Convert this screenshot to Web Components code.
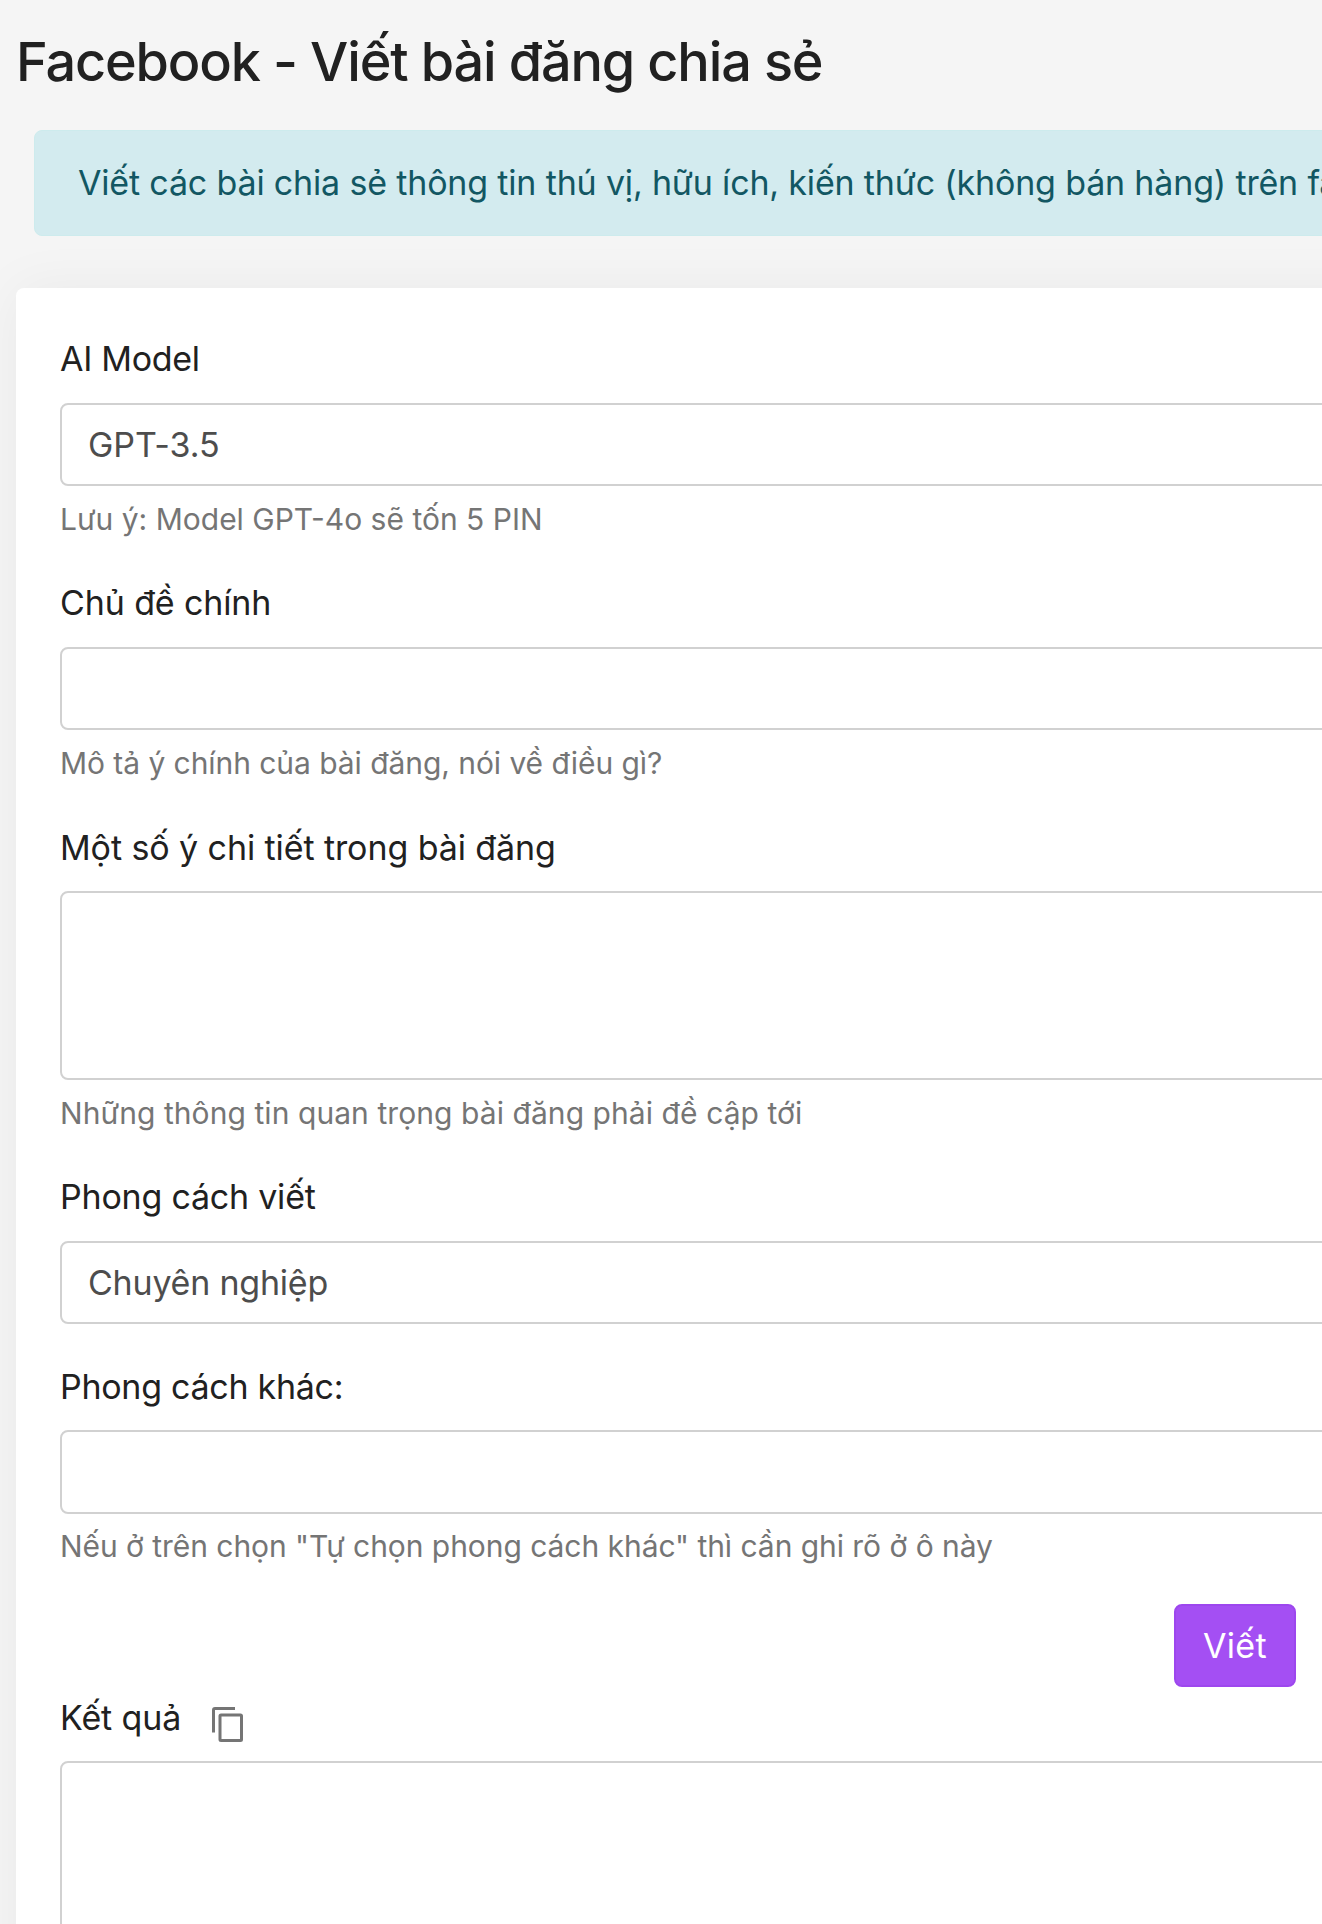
<!DOCTYPE html>
<html lang="vi">
<head>
<meta charset="utf-8">
<title>Facebook - Viết bài đăng chia sẻ</title>
<style>
  html, body { margin: 0; height: 100%; }

  body {
    overflow: hidden;
    background: #f5f5f5;
    color: #212121;
    font-family: Inter, "Noto Sans", sans-serif;
    font-size: 34px;
  }

  .model { --label-track: -0.3px; --value-track: -0.05px; }
  .topic { --label-track: -0.12px; --help-track: -0.06px; }
  .details { --label-track: -0.09px; --label-line: 56px; --help-track: 0.07px; }
  .style { --label-track: -0.22px; --value-track: -0.22px; }
  .other { --label-track: -0.28px; --label-line: 56px; --help-track: -0.05px; --input-height: 84px; --help-gap: 10px; margin-bottom: 1px; }
  .result { --label-track: -0.1px; --label-line: 56px; --rows-height: 400px; }
</style>
</head>
<body>
<writer-page heading="Facebook - Viết bài đăng chia sẻ">
  <info-alert slot="alert">Viết các bài chia sẻ thông tin thú vị, hữu ích, kiến thức (không bán hàng) trên facebook</info-alert>

  <form-field class="model" label="AI Model" help="Lưu ý: Model GPT-4o sẽ tốn 5 PIN">
    <select-box>GPT-3.5</select-box>
  </form-field>
  <form-field class="topic" label="Chủ đề chính" help="Mô tả ý chính của bài đăng, nói về điều gì?">
    <text-box></text-box>
  </form-field>
  <form-field class="details" label="Một số ý chi tiết trong bài đăng" help="Những thông tin quan trọng bài đăng phải đề cập tới">
    <text-box multiline></text-box>
  </form-field>
  <form-field class="style" label="Phong cách viết">
    <select-box>Chuyên nghiệp</select-box>
  </form-field>
  <form-field class="other" label="Phong cách khác:" help='Nếu ở trên chọn "Tự chọn phong cách khác" thì cần ghi rõ ở ô này'>
    <text-box></text-box>
  </form-field>

  <submit-row>Viết</submit-row>

  <form-field class="result" label="Kết quả">
    <copy-icon slot="action"></copy-icon>
    <text-box multiline></text-box>
  </form-field>
</writer-page>

<script>
/**
 * Base class: renders the template of the subclass into an open shadow root.
 */
class BaseElement extends HTMLElement {
  constructor() {
    super();
    this.attachShadow({ mode: 'open' });
  }

  connectedCallback() {
    this.shadowRoot.innerHTML = this.template();
  }
}

/** Page shell: heading, alert slot and the white card */
class WriterPage extends BaseElement {
  template() {
    return `
      <style>
        :host {
          display: block;
          height: 100%;
          overflow: hidden;
        }

        .content {
          width: 1400px;
        }

        h1 {
          margin: 0;
          padding: 28px 0 0 16px;
          height: 103px;
          box-sizing: border-box;
          font-size: 54px;
          font-weight: 500;
          line-height: 68px;
          letter-spacing: -1.15px;
          white-space: nowrap;
        }

        .alert {
          padding: 27px 0 0 34px;
        }

        .card {
          display: flex;
          flex-direction: column;
          gap: 35px;
          margin: 52px 0 0 16px;
          padding: 44px;
          box-sizing: border-box;
          background: #fff;
          border-radius: 8px;
          box-shadow: 0 0 56px rgba(33, 37, 41, 0.05);
        }
      </style>

      <div class="content">
        <h1>${this.getAttribute('heading')}</h1>
        <div class="alert"><slot name="alert"></slot></div>
        <div class="card"><slot></slot></div>
      </div>
    `;
  }
}

class InfoAlert extends BaseElement {
  template() {
    return `
      <style>
        :host {
          display: block;
          height: 106px;
          padding: 0 43px;
          box-sizing: border-box;
          background: #d3ebef;
          border: 1px solid #cdebed;
          border-radius: 8px;
          color: #125763;
          line-height: 104px;
          letter-spacing: -0.17px;
          white-space: nowrap;
        }
      </style>
      <slot></slot>
    `;
  }
}

/** Label, control and optional help text */
class FormField extends BaseElement {
  template() {
    const help = this.getAttribute('help');
    return `
      <style>
        :host {
          display: block;
        }

        :host(.result) {
          margin-top: -32px;
        }

        .label {
          display: flex;
          gap: 31px;
          height: 54px;
          margin-bottom: 17px;
          line-height: var(--label-line, 54px);
          white-space: nowrap;
        }

        label {
          letter-spacing: var(--label-track, 0);
        }

        .help {
          margin-top: var(--help-gap, 11px);
          color: #757575;
          font-size: 30px;
          line-height: 44px;
          letter-spacing: var(--help-track, 0);
          white-space: nowrap;
        }
      </style>

      <div class="label">
        <label>${this.getAttribute('label')}</label>
        <slot name="action"></slot>
      </div>
      <slot></slot>
      ${help ? `<div class="help">${help}</div>` : ''}
    `;
  }
}

class SelectBox extends BaseElement {
  template() {
    return `
      <style>
        :host {
          display: block;
          height: 83px;
          padding-left: 26px;
          box-sizing: border-box;
          border: 2px solid #d1d1d1;
          border-radius: 8px;
          background: #fff;
          color: #4d4d4d;
          line-height: 79px;
          letter-spacing: var(--value-track, 0);
        }
      </style>
      <slot></slot>
    `;
  }
}

class TextBox extends BaseElement {
  template() {
    const multiline = this.hasAttribute('multiline');
    return `
      <style>
        :host {
          display: block;
        }

        input, textarea {
          display: block;
          width: 100%;
          height: var(--input-height, 83px);
          margin: 0;
          padding: 12px 26px;
          box-sizing: border-box;
          border: 2px solid #d1d1d1;
          border-radius: 8px;
          outline: none;
          background: #fff;
          color: #4d4d4d;
          font: inherit;
          resize: none;
        }

        textarea {
          height: var(--rows-height, 189px);
        }
      </style>
      ${multiline ? '<textarea></textarea>' : '<input type="text">'}
    `;
  }
}

class SubmitRow extends BaseElement {
  template() {
    return `
      <style>
        :host {
          display: flex;
          justify-content: flex-end;
          width: 1236px;
        }

        button {
          width: 122px;
          height: 83px;
          padding: 0;
          border: 2px solid #9d47ee;
          border-radius: 8px;
          background: #a44ff3;
          color: #fff;
          font: inherit;
          letter-spacing: 0.3px;
        }
      </style>
      <button type="button"><slot></slot></button>
    `;
  }
}

class CopyIcon extends BaseElement {
  template() {
    return `
      <style>
        :host {
          display: block;
          padding-top: 17px;
        }

        svg {
          display: block;
        }
      </style>
      <svg width="31" height="35" viewBox="0 0 31 35" fill="none" stroke="#757575" stroke-width="3">
        <path d="M1.5 25.5V3Q1.5 1.5 3 1.5H23"/>
        <rect x="8" y="8" width="21.5" height="25.5" rx="1"/>
      </svg>
    `;
  }
}

customElements.define('writer-page', WriterPage);
customElements.define('info-alert', InfoAlert);
customElements.define('form-field', FormField);
customElements.define('select-box', SelectBox);
customElements.define('text-box', TextBox);
customElements.define('submit-row', SubmitRow);
customElements.define('copy-icon', CopyIcon);
</script>
</body>
</html>
